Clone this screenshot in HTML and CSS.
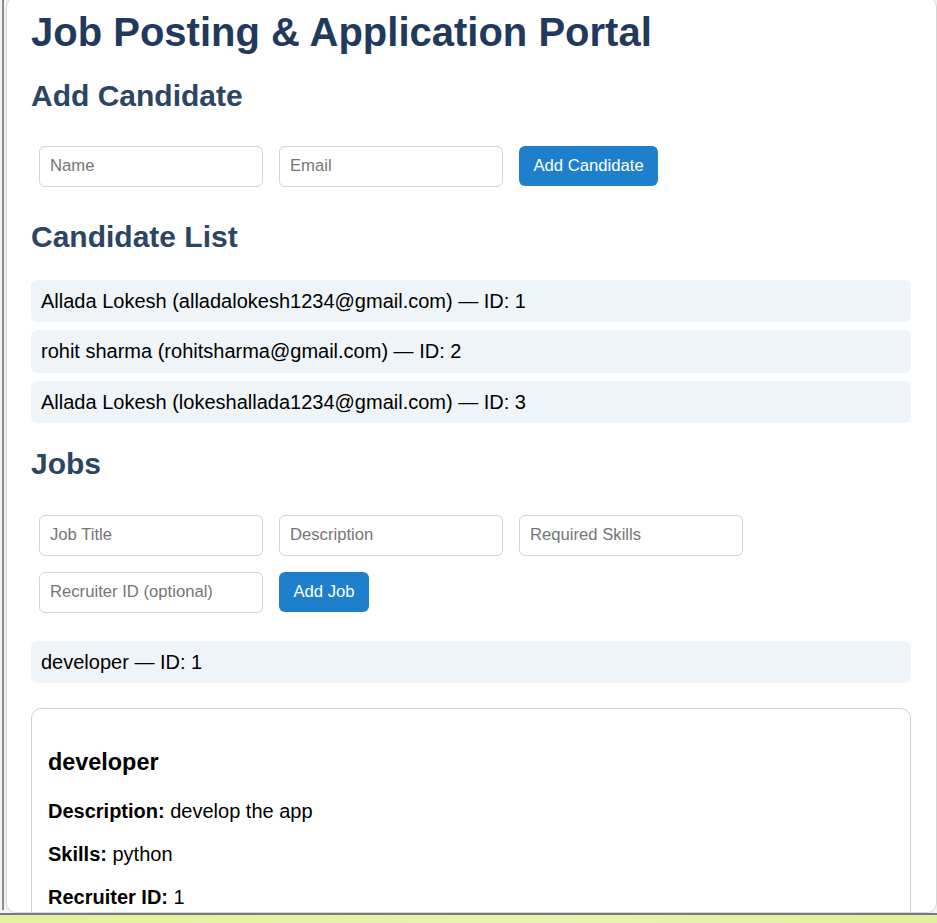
FILE: index.html
```html
<!DOCTYPE html>
<html lang="en">
<head>
<meta charset="utf-8">
<title>Job Posting &amp; Application Portal</title>
<link rel="stylesheet" href="styles.css">
</head>
<body>
<div class="frame">
  <div class="edge">
    <div class="page">
      <h1 class="title">Job Posting &amp; Application Portal</h1>

      <h2 class="section section-first">Add Candidate</h2>
      <div class="form form-candidate">
        <input class="field" type="text" placeholder="Name">
        <input class="field" type="text" placeholder="Email">
        <button class="btn">Add Candidate</button>
      </div>

      <h2 class="section">Candidate List</h2>
      <ul class="list">
        <li class="item">Allada Lokesh (alladalokesh1234@gmail.com) — ID: 1</li>
        <li class="item">rohit sharma (rohitsharma@gmail.com) — ID: 2</li>
        <li class="item">Allada Lokesh (lokeshallada1234@gmail.com) — ID: 3</li>
      </ul>

      <h2 class="section">Jobs</h2>
      <div class="form">
        <input class="field" type="text" placeholder="Job Title">
        <input class="field" type="text" placeholder="Description">
        <input class="field" type="text" placeholder="Required Skills">
        <input class="field" type="text" placeholder="Recruiter ID (optional)">
        <button class="btn">Add Job</button>
      </div>

      <ul class="list">
        <li class="item">developer — ID: 1</li>
      </ul>

      <div class="card">
        <h3 class="card-title">developer</h3>
        <p class="card-line"><strong>Description:</strong> develop the app</p>
        <p class="card-line"><strong>Skills:</strong> python</p>
        <p class="card-line"><strong>Recruiter ID:</strong> 1</p>
      </div>
    </div>
  </div>
</div>
</body>
</html>
```
FILE: styles.css
```css
* { box-sizing: border-box; }

html, body {
  margin: 0;
  padding: 0;
}

body {
  background: linear-gradient(90deg, #e4efa0, #e9f2b0 60%, #e2eda0);
  font-family: "Liberation Sans", Arial, sans-serif;
  height: 923px;
  overflow: hidden;
}

.frame {
  height: 915px;
  background: #f3f3f3;
  padding-left: 2px;
  border-bottom: 2px solid #7a7a7a;
  overflow: hidden;
}

.edge {
  height: 100%;
  border-left: 2px solid #8c8c8c;
  padding-left: 2px;
  background: #f1f1f1;
}

.page {
  margin-top: -3px;
  height: 916px;
  background: #ffffff;
  border: 1px solid #d6d6d6;
  border-radius: 10px;
  padding: 11px 25px 0 24px;
  overflow: hidden;
}

.title {
  margin: 0 0 24px;
  font-size: 40px;
  font-weight: bold;
  color: #1f3a5d;
  line-height: 46px;
}

.section {
  margin: 24px 0 25px;
  font-size: 30px;
  font-weight: bold;
  color: #2b4563;
  line-height: 34.5px;
}

.section-first { margin: 24px 0 24px; }

.form {
  display: flex;
  flex-wrap: wrap;
  align-items: center;
  margin: 0;
}

.form-candidate { padding-bottom: 1.5px; }

.field {
  width: 224px;
  height: 41px;
  margin: 8px;
  padding: 0 10px;
  border: 1px solid #cdd5df;
  border-radius: 6px;
  font-family: "Liberation Sans", Arial, sans-serif;
  font-size: 16.67px;
  color: #222;
  background: #fff;
  outline: none;
}

.field::placeholder { color: #767676; }

.btn {
  height: 40px;
  margin: 8px;
  padding: 0 14.5px;
  border: none;
  border-radius: 6px;
  background: #1e7fcc;
  color: #ffffff;
  font-family: "Liberation Sans", Arial, sans-serif;
  font-size: 16.67px;
  cursor: pointer;
}

.list {
  list-style: none;
  margin: 20px 0;
  padding: 0;
}

.item {
  background: #eff4f8;
  border-radius: 6px;
  padding: 10px;
  margin-bottom: 8px;
  font-size: 20px;
  line-height: 22.5px;
  color: #000;
}

.card {
  margin-top: 25px;
  border: 1px solid #d0d0d0;
  border-radius: 10px;
  padding: 17px 16px 15px;
  height: 260px;
}

.card-title {
  margin: 23.4px 0;
  font-size: 23.4px;
  line-height: 27px;
  font-weight: bold;
  color: #000;
}

.card-line {
  margin: 20px 0;
  font-size: 20px;
  line-height: 23px;
  color: #000;
}

.card-line strong { font-weight: bold; }
```
